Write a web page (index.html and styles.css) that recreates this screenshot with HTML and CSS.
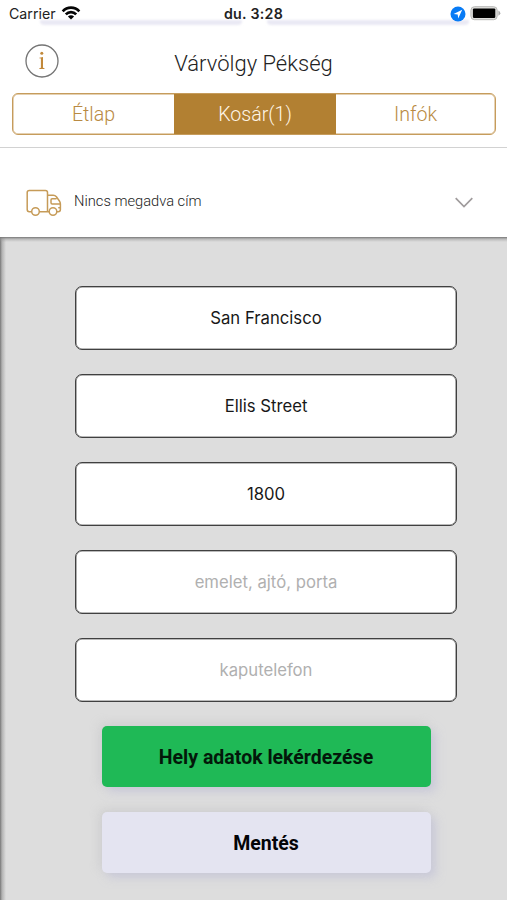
FILE: index.html
```html
<!DOCTYPE html>
<html lang="hu">
<head>
<meta charset="utf-8">
<title>Várvölgy Pékség</title>
<link rel="stylesheet" href="styles.css">
</head>
<body>
<div class="app">
  <div class="status">
    <div class="scrolled-cards"><i class="card-edge"></i><i class="card-edge"></i></div>
    <div class="carrier"><span>Carrier</span>
      <svg width="20" height="16" viewBox="0 0 20 16" fill="none" stroke="#050505" stroke-width="2.7"><path d="M1.7 6.3C6.3 1.4 13.7 1.4 18.3 6.3M4.8 9.4C7.7 6.4 12.3 6.4 15.2 9.4"/><path d="M10 14.4L6.9 11.4C8.6 9.9 11.4 9.9 13.1 11.4Z" fill="#050505" stroke="none"/></svg>
    </div>
    <div class="clock">du. 3:28</div>
    <div class="indicators">
      <svg width="16" height="16" viewBox="0 0 16 16"><circle cx="8" cy="8" r="7.5" fill="#087bf5"/><path d="M12.2 3.8L3.6 7.9L7.7 8.4L8.2 12.5Z" fill="#fff"/></svg>
      <svg width="32" height="16" viewBox="0 0 32 16"><rect x=".9" y=".7" width="26.3" height="13" rx="3.6" fill="#e0e0de" stroke="#b7b7b5"/><rect x="2.9" y="2.4" width="22.4" height="9.5" rx="1.2" fill="#000"/><path d="M28.4 4.6Q32.3 7.2 28.4 9.8Z" fill="#aaa"/></svg>
    </div>
  </div>
  <header class="header">
    <svg class="info" width="34" height="34" viewBox="0 0 34 34"><circle cx="17" cy="17" r="16" fill="#fff" stroke="#747474" stroke-width="1.3"/><g fill="#c2893a"><circle cx="16.8" cy="9.3" r="1.5"/><path d="M14.3 13.7L18 13.1V23.7L19.5 24.3V24.9H14.3V24.3L15.9 23.7V14.5L14.3 14.2Z"/></g></svg>
    <h1 class="title">Várvölgy Pékség</h1>
  </header>
  <nav class="tabs">
    <span class="tab">Étlap</span><span class="tab active">Kosár(1)</span><span class="tab">Infók</span>
  </nav>
  <section class="address">
    <svg class="truck" width="36" height="28" viewBox="0 0 36 28" fill="none" stroke="#c69b58" stroke-width="1.5" stroke-linecap="round" stroke-linejoin="round"><path d="M5.6 22.7H3.3Q1.2 22.7 1.2 20.5V3.6Q1.2 1.5 3.3 1.5H19.4Q21.5 1.5 21.5 3.6V22.7M13.5 22.7H22.8M21.8 6.3H27.3Q29.1 6.3 30.4 7.8L33.4 12Q34.4 13.5 34.4 14.9V20.5Q34.4 22.7 32.2 22.7H30.9M30 9.8H26.1Q25 9.8 25 10.9V13.7Q25 14.9 26.2 14.9H34.2M32.8 18.8H34.2"/><circle cx="9.5" cy="22.5" r="3.8" fill="#fff"/><circle cx="27" cy="22.5" r="3.8" fill="#fff"/></svg>
    <span class="address-text">Nincs megadva cím</span>
    <svg class="chevron" width="20" height="12" viewBox="0 0 20 12" fill="none" stroke="#a09c9d" stroke-width="1.7"><path d="M1.7 1.2L10 9.6L18.3 1.2"/></svg>
  </section>
  <main class="form">
    <div class="field">San Francisco</div>
    <div class="field">Ellis Street</div>
    <div class="field">1800</div>
    <div class="field empty">emelet, ajtó, porta</div>
    <div class="field empty">kaputelefon</div>
    <div class="button primary">Hely adatok lekérdezése</div>
    <div class="button">Mentés</div>
  </main>
</div>
</body>
</html>
```
FILE: styles.css
```css
* { box-sizing: border-box; }
body { margin: 0; font-family: Roboto, "Liberation Sans", sans-serif; background: #fff; }
svg { display: block; flex: none; }
.app { width: 507px; height: 900px; overflow: hidden; display: flex; flex-direction: column; }
.status {
  position: relative; height: 27px; flex: none;
  display: grid; grid-template-columns: 1fr auto 1fr; align-items: start;
  font-family: Inter, sans-serif; font-size: 14.2px; line-height: 28px; color: #222;
}
.scrolled-cards { position: absolute; left: 40px; right: 38px; top: 20px; display: flex; gap: 25px; }
.card-edge { flex: 1; height: 5px; background: #eae9f4; border-radius: 0 0 4px 4px; filter: blur(.8px); }
.carrier, .clock, .indicators { position: relative; }
.carrier { display: flex; padding-left: 9px; gap: 5px; }
.carrier svg { margin-top: 5px; }
.clock { font-weight: 600; letter-spacing: .3px; }
.indicators { display: flex; justify-content: flex-end; gap: 4px; padding: 6px 5px 0 0; }
.header { height: 66px; flex: none; display: grid; grid-template-columns: 82px 1fr 82px; }
.info { margin: 17px 0 0 25px; }
.title { margin: 23px 0 0; text-align: center; font-size: 22px; line-height: 28px; font-weight: 300; color: #222; }
.tabs {
  height: 42px; flex: none; margin: 0 11px 0 12px; display: grid; grid-template-columns: 161px 162px 1fr;
  border: 1px solid #c69c5c; border-radius: 6px; overflow: hidden;
  box-shadow: inset 0 0 0 .7px #dcc198;
}
.tab { display: flex; align-items: center; justify-content: center; font-size: 19.6px; font-weight: 300; color: #b98a43; }
.active { background: #b28032; color: #fff5e7; }
.address {
  height: 90px; flex: none; margin-top: 12px; border-top: 1px solid #d2d2d2;
  display: flex; align-items: center; padding: 16px 33px 0 26px; background: #fff;
}
.truck { margin-top: 4px; }
.address-text { margin-left: 12px; font-size: 14.7px; font-weight: 300; color: #222; }
.chevron { margin: 4px 0 0 auto; }
.form {
  flex: 1; display: flex; flex-direction: column; align-items: center;
  padding: 49px 0 0 25px;
  background:
    linear-gradient(180deg, #777, rgba(150,150,150,.5) 2px, rgba(221,221,221,0) 5px),
    linear-gradient(90deg, #777, rgba(150,150,150,.6) 2px, rgba(221,221,221,0) 6px),
    #ddd;
}
.field {
  width: 382px; height: 64px; margin-bottom: 24px; flex: none;
  display: flex; align-items: center; justify-content: center;
  background: #fff; border: 1px solid #404040; border-radius: 7px;
  box-shadow: inset 0 0 0 .6px #777;
  font-family: Inter, sans-serif; font-size: 16.7px; color: #181818;
}
.empty { color: #b0b0b0; }
.button {
  width: 329px; height: 61px; margin-bottom: 25px; padding-top: 1px; flex: none;
  display: flex; align-items: center; justify-content: center;
  border-radius: 5px; background: #e4e4f1; color: #030407; font-size: 19.5px; font-weight: 700;
  box-shadow: 5px 5px 10px rgba(190,190,215,.6), -3px -3px 10px rgba(185,185,185,.35);
}
.primary { background: #1fb956; color: #03180a; }
```
